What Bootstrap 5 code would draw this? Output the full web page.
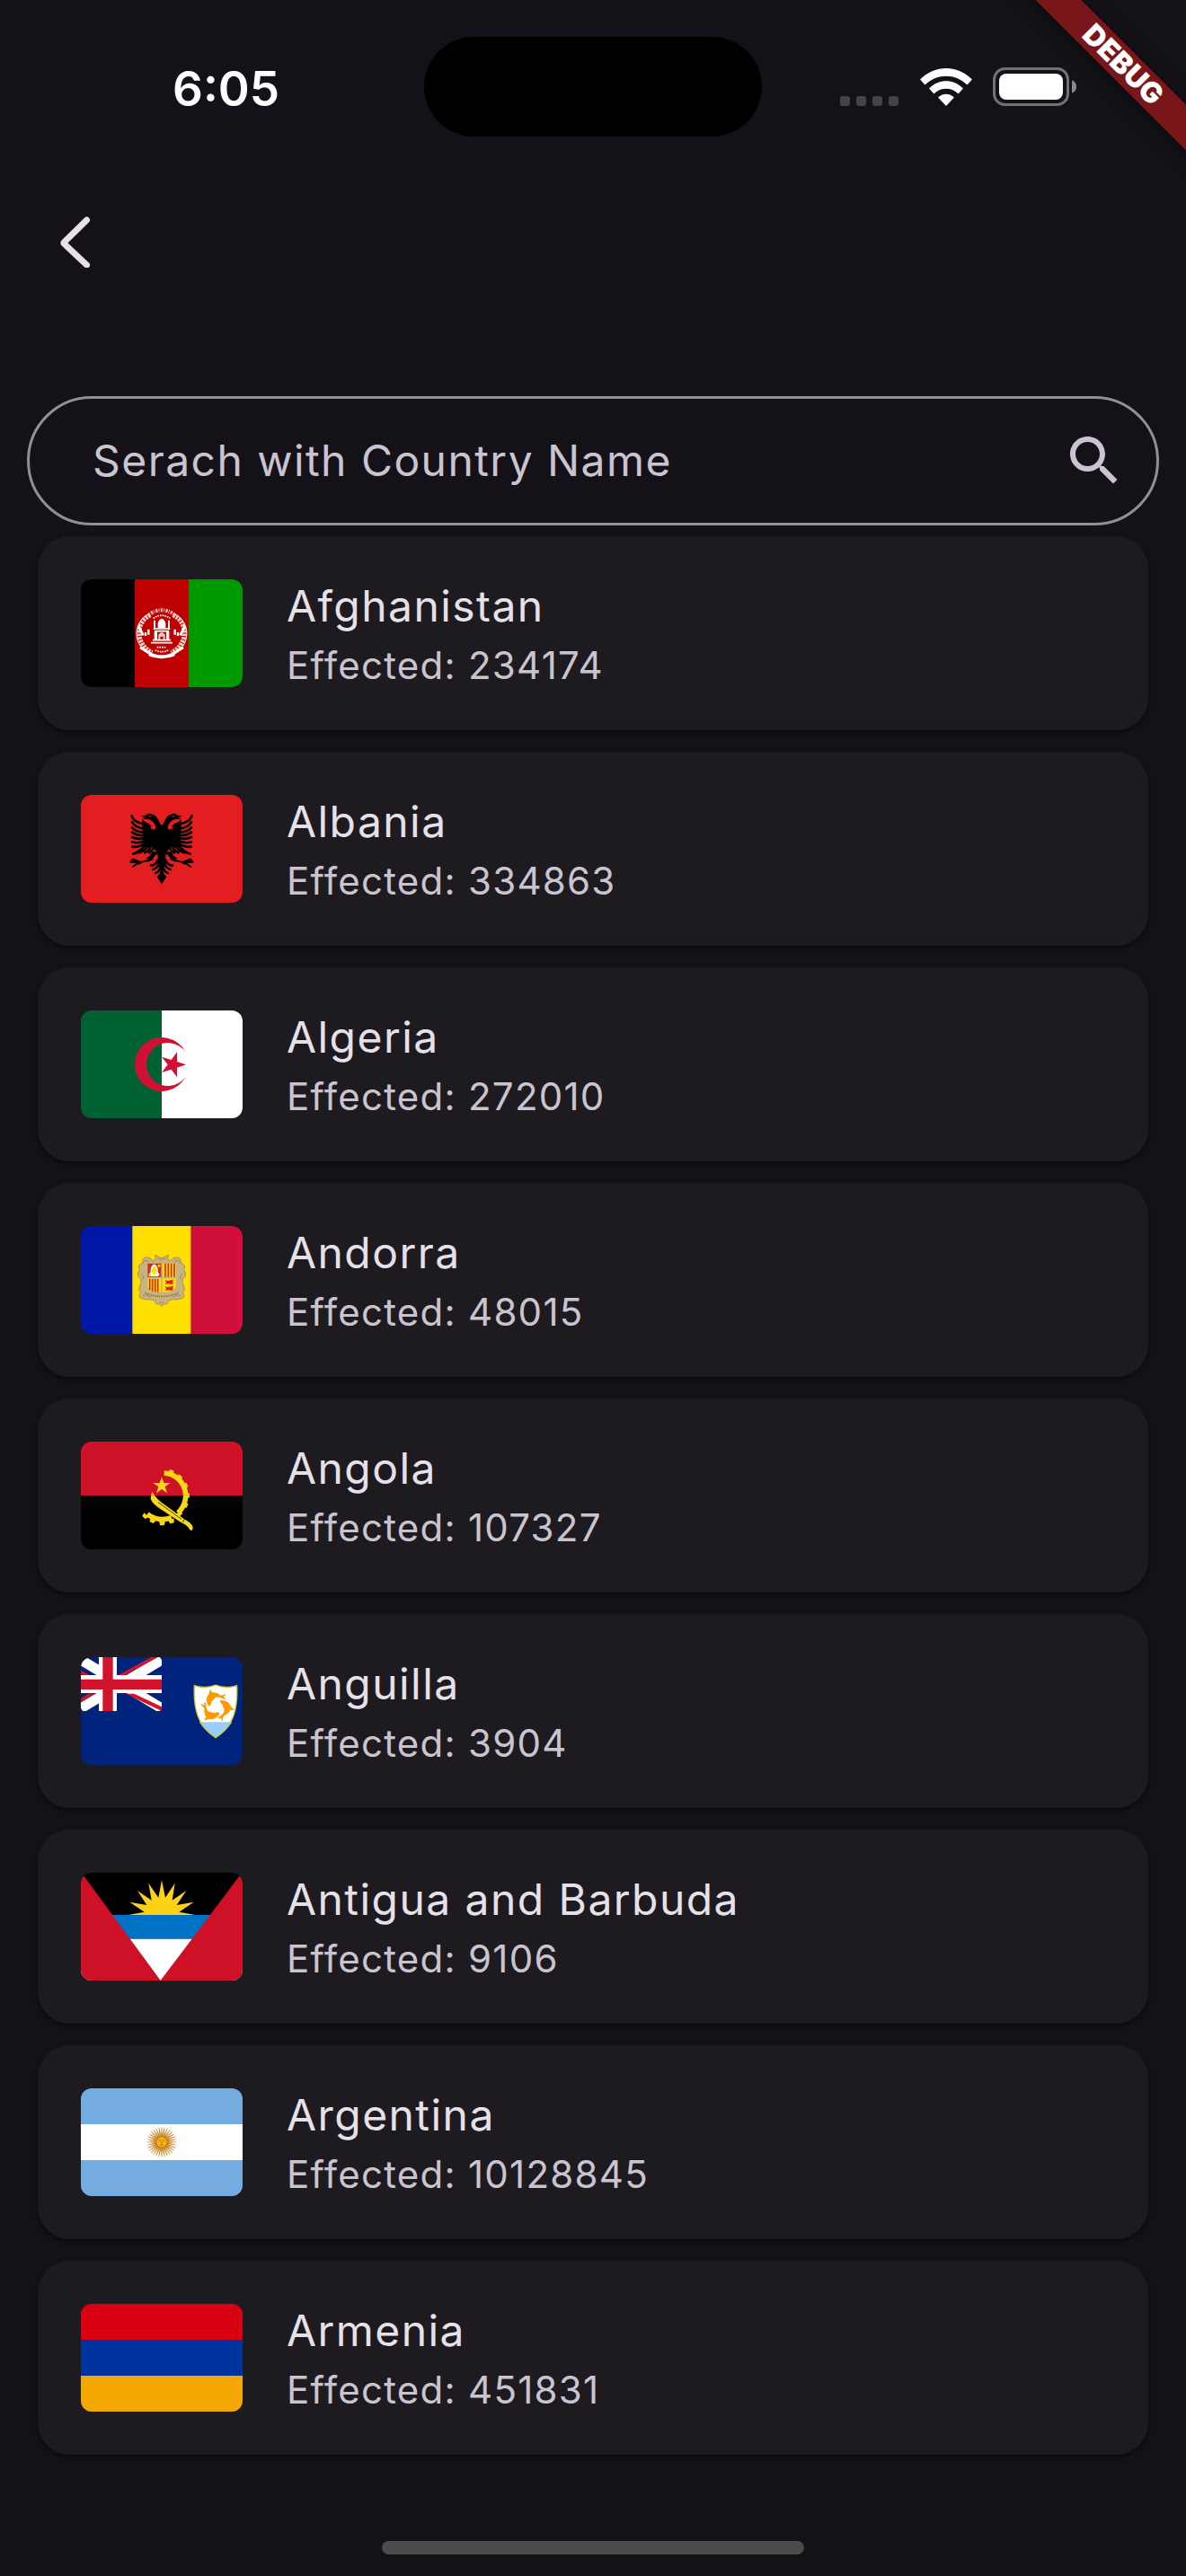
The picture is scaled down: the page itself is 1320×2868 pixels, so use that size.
<!DOCTYPE html>
<html lang="en" data-bs-theme="dark">
<head>
<meta charset="utf-8">
<meta name="viewport" content="width=device-width, initial-scale=1">
<title>Countries</title>
<link href="https://cdn.jsdelivr.net/npm/bootstrap@5.3.0/dist/css/bootstrap.min.css" rel="stylesheet">
<style>
  body { background: #141218; color: #e6e0e9; font-family: Inter, "Liberation Sans", sans-serif; }
  svg { display: block; flex: none; }
  .screen { position: relative; overflow: hidden; }
  .status-bar { display: grid; grid-template-columns: 1fr 376px 1fr; height: 177px; padding-top: 41px; padding-bottom: 25px; }
  .clock { padding: 4px 0 0 192px; font-size: 53px; line-height: 60px; font-weight: 600; color: #fff; }
  .island { height: 111px; background: #000; border-radius: 56px; }
  .status-icons { padding-right: 121px; gap: 23px; }
  .ribbon { position: absolute; top: 54px; right: -80px; width: 300px; height: 36px; background: #791619; box-shadow: 0 0 18px rgba(0,0,0,.5); transform: rotate(45deg); font-size: 32px; line-height: 36px; font-weight: 900; color: #fff; }
  .app-bar { height: 168px; padding-left: 47px; }
  .back-btn { width: 72px; height: 72px; }
  .search-box { height: 144px; margin: 96px 30px 0; border: 3px solid #938f99; border-radius: 72px; padding: 0 33px 0 70px; }
  .search-box .form-control { font-size: 48px; line-height: 72px; letter-spacing: .03em; color: #e6e0e9; }
  .search-box .form-control::placeholder { color: #cac4d0; opacity: 1; }
  .country-list { margin: 12px 42px 0; gap: 24px; }
  .country { height: 216px; padding: 0 48px; gap: 49px; background: #1d1b20; border: 0; border-radius: 36px; box-shadow: 0 3px 6px rgba(0,0,0,.4); }
  .flag-pic { width: 180px; height: 120px; border-radius: 12px; }
  .country-name { font-size: 48px; line-height: 72px; font-weight: 400; letter-spacing: .03em; color: #e6e0e9; }
  .country-count { font-size: 42px; line-height: 60px; letter-spacing: .03em; color: #cac4d0; }
  .home-bar { width: 470px; height: 15px; margin-bottom: 24px; border-radius: 8px; background: #4b4b4b; }
</style>
<script src="https://cdn.jsdelivr.net/npm/bootstrap@5.3.0/dist/js/bootstrap.bundle.min.js"></script>
</head>
<body>
<div class="screen d-flex flex-column min-vh-100">
  <header>
    <div class="status-bar align-items-center">
      <div class="clock">6:05</div>
      <div class="island"></div>
      <div class="status-icons d-flex justify-content-end align-items-center">
        <div class="d-flex align-items-end gap-4">
          <svg width="65" height="11" viewBox="0 0 65 11" fill="#454348"><rect width="11" height="11" rx="3"/><rect x="18" width="11" height="11" rx="3"/><rect x="36" width="11" height="11" rx="3"/><rect x="54" width="11" height="11" rx="3"/></svg>
          <svg width="58" height="42" viewBox="0 0 58 42" fill="#fff"><path d="M.5 13Q0 12.500.5 12C17-4 41-4 57.500 12Q58 12.500 57.500 13L53 18Q52.500 18.500 52 18C39 5.500 19 5.500 6 18Q5.500 18.500 5 18Z"/><path d="M10.500 23Q10 22.500 10.500 22C21 11.500 37 11.500 47.500 22Q48 22.500 47.500 23L43 28Q42.500 28.500 42 28C35 21 23 21 16 28Q15.500 28.500 15 28Z"/><path d="M20.500 33Q20 32.500 20.500 32C25.500 27.500 32.500 27.500 37.500 32Q38 32.500 37.500 33L29.500 41.500Q29 42 28.500 41.500Z"/></svg>
        </div>
        <svg width="94" height="43" viewBox="0 0 94 43"><rect x="1.500" y="1.500" width="82" height="40" rx="12" fill="none" stroke="#727175" stroke-width="3"/><rect x="7" y="7" width="71" height="29" rx="8" fill="#fff"/><path d="M88 14.500Q93 16 93 21.500T88 28.500Z" fill="#8a898c"/></svg>
      </div>
    </div>
    <div class="ribbon text-center">DEBUG</div>
    <nav class="app-bar d-flex align-items-center">
      <button type="button" class="back-btn btn p-0" aria-label="Back">
        <svg width="72" height="72" viewBox="0 0 72 72" fill="none" stroke="#e6e0e9" stroke-width="7" stroke-linecap="round" stroke-linejoin="round"><path d="M48.500 19L23.500 43.500Q22.500 44.500 23.500 45.500L48.500 69"/></svg>
      </button>
    </nav>
  </header>

  <main>
    <form class="search-box d-flex align-items-center" role="search">
      <input type="text" class="form-control border-0 bg-transparent shadow-none p-0" placeholder="Serach with Country Name" aria-label="Serach with Country Name">
      <button type="button" class="btn border-0 p-0" aria-label="Search">
        <svg width="72" height="72" viewBox="0 0 24 24" fill="#cac4d0"><path d="M15.500 14h-.79l-.28-.27C15.410 12.590 16 11.110 16 9.500 16 5.910 13.090 3 9.500 3S3 5.910 3 9.500 5.910 16 9.500 16c1.610 0 3.090-.59 4.230-1.570l.27.28v.79l5 4.990L20.490 19l-4.990-5zm-6 0C7.010 14 5 11.990 5 9.500S7.010 5 9.500 5 14 7.010 14 9.500 11.990 14 9.500 14z"/></svg>
      </button>
    </form>

    <ul class="country-list list-unstyled d-flex flex-column">
      <li class="country card flex-row align-items-center">
        <svg class="flag-pic" viewBox="30 45 540 360">
          <path fill="#000" d="M30 45h180v360H30z"/><path fill="#be0000" d="M210 45h180v360H210z"/><path fill="#090" d="M390 45h180v360H390z"/>
          <g fill="none" stroke="#fff">
            <path d="M262 164C210 190 212 262 268 290M338 164C390 190 388 262 332 290" stroke-width="15" stroke-dasharray="8 3" stroke="#f3cfc4"/>
            <path d="M258 160C198 190 206 272 262 296M342 160C402 190 394 272 338 296" stroke-width="3"/>
            <path d="M258 162Q300 134 342 162" stroke-width="12" stroke-dasharray="3 4 7 3" stroke="#f0b8b0"/>
            <path d="M272 175Q300 156 328 175" stroke-width="5" stroke-dasharray="5 3"/>
            <path d="M222 200l16 32M378 200l-16 32M228 272l38 24M372 272l-38 24" stroke-width="9"/>
            <path d="M258 295Q300 312 342 295" stroke-width="12"/>
            <path d="M278 282q22 10 44 0M284 272h32" stroke-width="5" stroke-dasharray="5 3"/>
            <path d="M276 182v30M324 182v30" stroke-width="6"/>
            <path d="M272 210h56M276 218h48M264 257h72M270 248h60" stroke-width="5"/>
            <path d="M280 218v30M320 218v30" stroke-width="10"/>
            <path d="M256 212v18M344 212v18M246 222v12M354 222v12" stroke-width="7"/>
          </g>
          <path fill="#fff" d="M287 208v-15q2-13 13-17q11 4 13 17v15z"/><path fill="#f3cfc4" d="M289 246v-16q11-16 22 0v16h-6v-10h-10v10z"/>
        </svg>
        <div><h2 class="country-name m-0">Afghanistan</h2><p class="country-count m-0">Effected: 234174</p></div>
      </li>
      <li class="country card flex-row align-items-center">
        <svg class="flag-pic" viewBox="30 45 540 360">
          <path fill="#e41e20" d="M30 45h540v360H30z"/>
          <defs>
            <g id="eagle-half">
              <path d="M301 148Q293 141 290 131Q283 114 271 110Q254 104 247 113L231 116L246 120L233 127L252 126Q263 126 272 137Q282 148 278 158Q270 163 262 156Q263 148 270 151Q264 142 252 139L234 128L236 165L238 200Q236 214 246 219Q262 222 272 218L286 244L288 262Q284 280 296 296L293 308L284 319L301 344Z"/>
              <path fill="none" stroke="#000" stroke-width="8" stroke-linecap="round" d="M200 115Q206 137 240 142M201 136Q212 155 242 157M201 154Q214 169 242 170M201 170Q218 182 242 180M201 186Q220 196 242 189M201 202Q222 209 243 198M202 218Q222 222 246 206M205 242Q226 236 246 211M224 238Q246 232 254 214M244 238Q260 232 264 214M258 238Q272 232 274 214"/>
              <path d="M288 240Q270 252 271 262L248 270L257 261L246 258L262 247Q262 238 276 234Z"/>
              <path fill="none" stroke="#000" stroke-width="5" stroke-linecap="round" d="M256 264Q225 272 195 270M226 268L203 259M226 268L204 285M240 267L222 276M214 269L198 264"/>
              <path fill="none" stroke="#000" stroke-width="8" stroke-linecap="round" d="M264 281Q280 281 288 262M271 294Q286 290 292 272M280 306Q292 302 296 284"/>
              <path fill="none" stroke="#e41e20" stroke-width="3" d="M257 117h9"/>
              <path fill="none" stroke="#e41e20" stroke-width="9" stroke-linecap="round" d="M264 142Q276 148 274 156"/>
            </g>
          </defs>
          <use href="#eagle-half"/><use href="#eagle-half" transform="matrix(-1 0 0 1 600 0)"/>
        </svg>
        <div><h2 class="country-name m-0">Albania</h2><p class="country-count m-0">Effected: 334863</p></div>
      </li>
      <li class="country card flex-row align-items-center">
        <svg class="flag-pic" viewBox="30 45 540 360">
          <path fill="#fff" d="M300 45h270v360H300z"/><path fill="#006233" d="M30 45h270v360H30z"/>
          <path fill="#d21034" d="M380 184A90 90 0 1 0 380 266A72 72 0 1 1 380 184ZM381 226L351 216L351 184L332 210L300 200L320 226L300 252L332 242L351 268L351 236Z"/>
        </svg>
        <div><h2 class="country-name m-0">Algeria</h2><p class="country-count m-0">Effected: 272010</p></div>
      </li>
      <li class="country card flex-row align-items-center">
        <svg class="flag-pic" viewBox="30 45 540 360">
          <path fill="#0018a8" d="M30 45h172v360H30z"/><path fill="#fedf00" d="M202 45h196v360H202z"/><path fill="#d0103a" d="M398 45h172v360H398z"/>
          <path fill="#c7b37f" stroke="#a8925c" stroke-width="3" d="M300 152Q290 150 280 142Q274 140 280 150Q284 158 270 161Q262 148 246 150Q232 154 236 170Q220 172 224 186Q230 192 222 198Q216 212 230 222Q234 236 226 246Q220 258 230 266Q220 276 230 286Q248 292 262 290Q274 292 280 298Q276 306 290 306Q296 306 300 313Q304 306 310 306Q324 306 320 298Q326 292 338 290Q352 292 370 286Q380 276 370 266Q380 258 374 246Q366 236 370 222Q384 212 378 198Q370 192 376 186Q380 172 364 170Q368 154 354 150Q338 148 330 161Q316 158 320 150Q326 140 320 142Q310 150 300 152Z"/>
          <path fill="none" stroke="#a08a58" stroke-width="3" d="M286 152q14 10 28 0M238 166q10-12 20 0M362 166q-10-12-20 0M232 204q10 8 6 18M368 204q-10 8-6 18M236 278q18-6 26 6M364 278q-18-6-26 6M292 300h16"/>
          <path fill="none" stroke="#806c3f" stroke-width="5" stroke-dasharray="4 3" d="M244 268Q270 280 300 280T356 268"/>
          <path fill="#d52b1e" d="M253 170h45v45h-45z"/><path fill="#fedf00" d="M303 170h44v45h-44zM253 220h45v46q-38 0-45-18zM303 220h44v28q-7 18-44 18z"/>
          <path stroke="#d52b1e" stroke-width="5" d="M312 170v45M322 170v45M332 170v45M342 170v45M260 221v37M269 221v42M278 221v44M287 221v45"/>
          <path fill="#fff" d="M275 172q14 8 12 26l6 10-6 5h-24l-6-5 6-10q-2-18 12-26z"/><path fill="#fedf00" d="M275 178q10 12 8 22l-8 10-8-10q-2-10 8-22zM287 174h8v8h-8zM256 205h8v7h-8z"/>
          <path fill="#d52b1e" d="M311 225l8 3 13-2 6-3-1 12 3 3-8 1-13-1-8 2 4-7zM311 246l8 3 13-2 6-3-1 12 3 3-8 1-13-1-8 2 4-7z"/>
        </svg>
        <div><h2 class="country-name m-0">Andorra</h2><p class="country-count m-0">Effected: 48015</p></div>
      </li>
      <li class="country card flex-row align-items-center">
        <svg class="flag-pic" viewBox="30 45 540 360">
          <path fill="#000" d="M30 45h540v360H30z"/><path fill="#ce1126" d="M30 45h540v180H30z"/>
          <defs><path id="gear-tooth" fill="#f9d616" d="M293 148l3-13h14l3 13z"/></defs>
          <path fill="none" stroke="#f9d616" stroke-width="17" d="M308 150A76 76 0 0 1 354 283M333 299A84 84 0 0 1 252 287"/>
          <use href="#gear-tooth" transform="rotate(20 303 225)"/><use href="#gear-tooth" transform="rotate(43 303 225)"/><use href="#gear-tooth" transform="rotate(66 303 225)"/><use href="#gear-tooth" transform="rotate(90 303 225)"/><use href="#gear-tooth" transform="rotate(113 303 225)"/><use href="#gear-tooth" transform="rotate(137 303 225)"/><use href="#gear-tooth" transform="rotate(160 303 229)"/><use href="#gear-tooth" transform="rotate(181 303 230)"/><use href="#gear-tooth" transform="rotate(203 303 229)"/><use href="#gear-tooth" transform="rotate(222 303 229)"/>
          <path fill="#f9d616" d="M300 163L307 183L329 183L311 196L318 217L300 204L282 217L289 196L271 183L293 183Z"/>
          <path fill="#f9d616" d="M268 213Q284 240 312 257L374 303Q396 314 403 328Q406 338 399 343Q394 342 388 331Q380 321 368 317L300 273Q268 252 263 236Q264 222 268 213Z"/>
          <path fill="none" stroke="#000" stroke-width="2" d="M288 248L366 304M376 304L369 316"/>
        </svg>
        <div><h2 class="country-name m-0">Angola</h2><p class="country-count m-0">Effected: 107327</p></div>
      </li>
      <li class="country card flex-row align-items-center">
        <svg class="flag-pic" viewBox="30 45 540 360">
          <path fill="#00247d" d="M30 45h540v360H30z"/>
          <svg x="30" y="45" width="270" height="180" viewBox="0 0 270 180">
            <path stroke="#fff" stroke-width="36" d="M0 0L270 180M270 0L0 180" transform="matrix(1 0 0 .9 0 9)"/>
            <path fill="#cf142b" d="M0 44L30 61H8L0 56ZM0 138L26 122H48L0 150ZM124 61L234 0H258L146 61ZM150 122H178L270 166V180Z"/>
            <path fill="#fff" d="M60 0h60v180H60zM0 60h270v60H0z"/><path fill="#cf142b" d="M73 0h34v180H73zM0 74h270v34H0z"/>
          </svg>
          <path fill="#fff" d="M409 140Q445 152 480 138Q515 152 551 140Q554 200 540 240Q524 285 480 314Q436 285 420 240Q406 200 409 140Z"/>
          <path fill="#9cf" d="M425 262H535Q516 292 480 314Q444 292 425 262Z"/>
          <path fill="none" stroke="#c9c92e" stroke-width="4" d="M409 140Q445 152 480 138Q515 152 551 140Q554 200 540 240Q524 285 480 314Q436 285 420 240Q406 200 409 140Z"/>
          <g fill="#ff9900"><path id="dolphin" d="M461 153Q466 157 468 163Q486 163 496 173Q506 172 516 167Q513 173 506 177Q513 181 514 186Q503 184 496 180Q484 176 476 183Q472 192 466 193Q467 203 459 210Q449 202 450 183Q452 174 458 167Z"/><use href="#dolphin" transform="rotate(120 482 210)"/><use href="#dolphin" transform="rotate(240 482 210)"/></g>
        </svg>
        <div><h2 class="country-name m-0">Anguilla</h2><p class="country-count m-0">Effected: 3904</p></div>
      </li>
      <li class="country card flex-row align-items-center">
        <svg class="flag-pic" viewBox="30 45 540 360">
          <path fill="#000" d="M30 45h540v142H30z"/><path fill="#0072c6" d="M30 186h540v80H30z"/><path fill="#fff" d="M30 266h540v139H30z"/>
          <path fill="#fcd116" d="M188 186L242 176L193 143L250 153L219 105L266 137L256 80L289 128L300 70L312 128L344 80L335 137L382 105L350 153L407 143L358 176L412 186Z"/>
          <path fill="#ce1126" d="M30 45H32L296 405H30ZM570 45H568L296 405H570Z"/>
        </svg>
        <div><h2 class="country-name m-0">Antigua and Barbuda</h2><p class="country-count m-0">Effected: 9106</p></div>
      </li>
      <li class="country card flex-row align-items-center">
        <svg class="flag-pic" viewBox="30 45 540 360">
          <path fill="#74acdf" d="M30 45h540v360H30z"/><path fill="#fff" d="M30 165h540v120H30z"/>
          <defs>
            <path id="ray1" fill="#cd8b34" d="M297 208L299 175H301L303 208Z"/>
            <g id="ray2"><use href="#ray1"/><use href="#ray1" transform="rotate(11.250 300 225)"/></g>
            <g id="ray4"><use href="#ray2"/><use href="#ray2" transform="rotate(22.500 300 225)"/></g>
            <g id="ray8"><use href="#ray4"/><use href="#ray4" transform="rotate(45 300 225)"/></g>
          </defs>
          <use href="#ray8"/><use href="#ray8" transform="rotate(90 300 225)"/><use href="#ray8" transform="rotate(180 300 225)"/><use href="#ray8" transform="rotate(270 300 225)"/>
          <circle cx="300" cy="225" r="19" fill="#f6b40e" stroke="#c07a1c" stroke-width="4"/>
          <path fill="none" stroke="#a8701a" stroke-width="3" d="M289 220q4-4 8 0M303 220q4-4 8 0M300 221v8M294 234h12"/>
        </svg>
        <div><h2 class="country-name m-0">Argentina</h2><p class="country-count m-0">Effected: 10128845</p></div>
      </li>
      <li class="country card flex-row align-items-center">
        <svg class="flag-pic" viewBox="30 45 540 360">
          <path fill="#d90012" d="M30 45h540v121H30z"/><path fill="#0033a0" d="M30 165h540v121H30z"/><path fill="#f2a800" d="M30 285h540v120H30z"/>
        </svg>
        <div><h2 class="country-name m-0">Armenia</h2><p class="country-count m-0">Effected: 451831</p></div>
      </li>
    </ul>
  </main>
  <div class="home-bar mt-auto mx-auto"></div>
</div>
</body>
</html>
